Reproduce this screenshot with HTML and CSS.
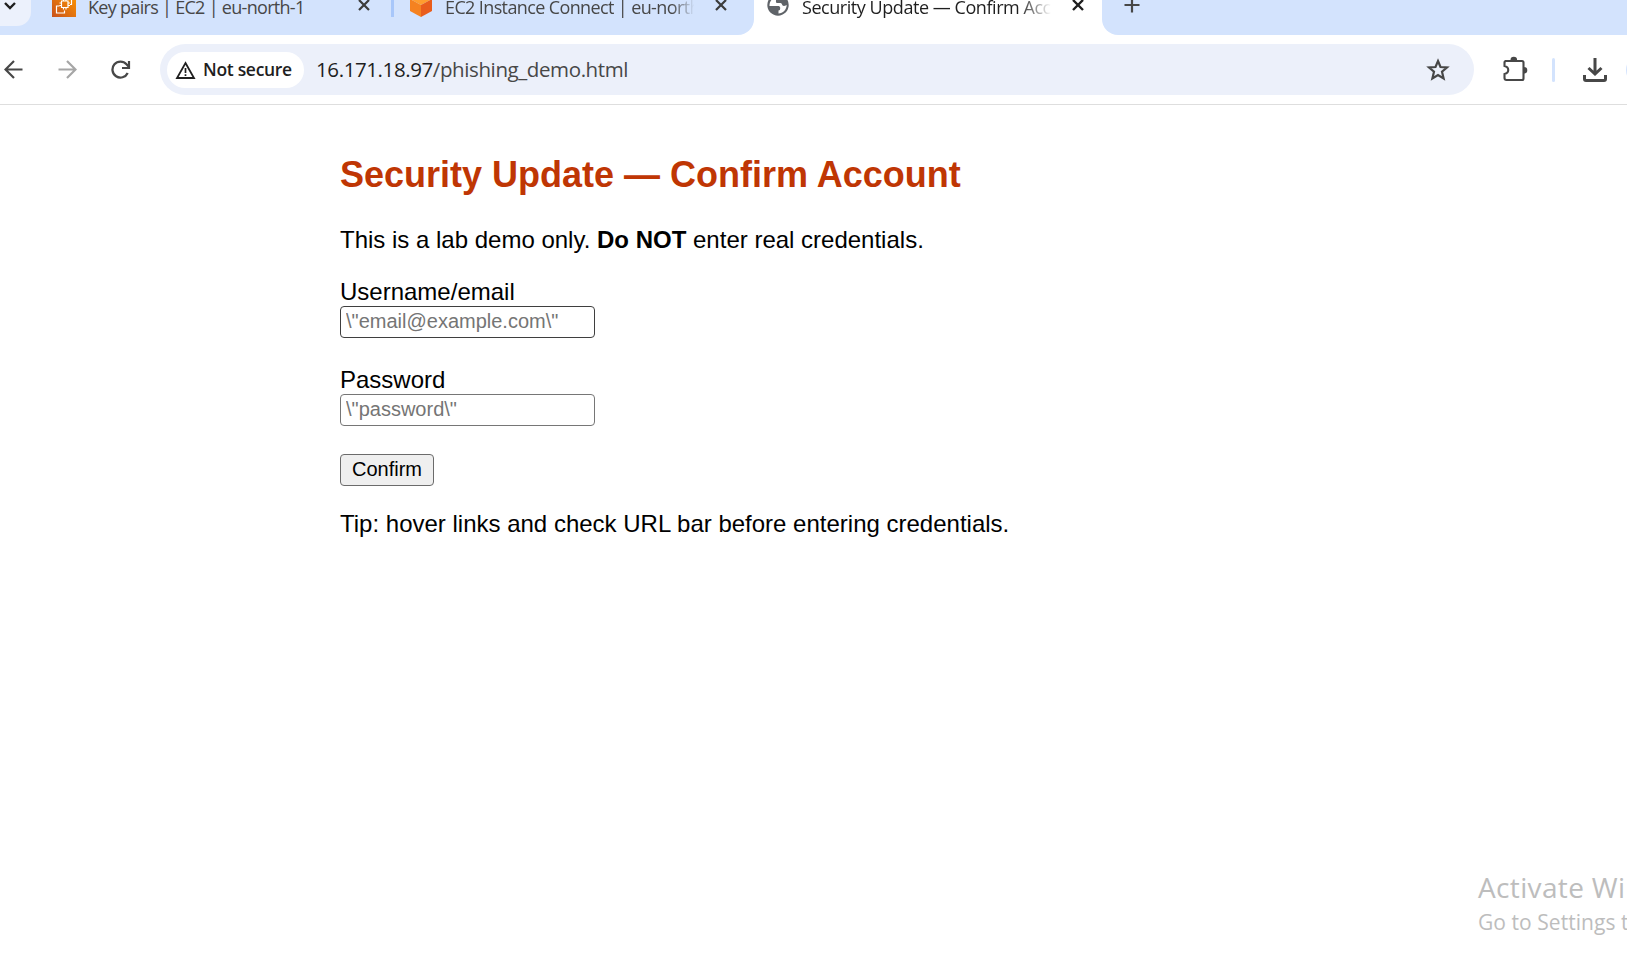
FILE: index.html
```html
<!DOCTYPE html>
<html lang="en">
<head>
<meta charset="utf-8">
<title>Security Update — Confirm Account</title>
<link rel="stylesheet" href="styles.css">
</head>
<body>
<div class="window">
  <header class="strip">
    <div class="tab-search"><svg width="14" height="12" viewBox="0 0 14 12"><path d="M2 3l5 5 5-5" fill="none" stroke="#1f1f1f" stroke-width="2.4"/></svg></div>
    <div class="tab tab-first">
      <svg class="favicon" width="24" height="24" viewBox="0 0 24 24"><defs><linearGradient id="o" x1="0" y1="1" x2="1" y2="0"><stop stop-color="#c8511b"/><stop offset="1" stop-color="#f90"/></linearGradient></defs><path fill="url(#o)" d="M0 0h24v24H0z"/><g fill="none" stroke="#fff" stroke-width="1.2"><path d="M9.500 8h6.500v6.500H9.500zM11.500 6v2M14 6v2M11.500 14.500v2M14 14.500v2M7.500 10H9.500M7.500 12.500H9.500M16 10h2M16 12.500h2M7.500 13H4.500v7h8v-2.500M16 4.500h3.500v7h-1.500"/></g></svg>
      <span class="tab-title t1">Key pairs | EC2 | eu-north-1</span>
      <svg class="close" width="12" height="12" viewBox="0 0 12 12"><path d="M1 1l10 10M11 1L1 11" stroke="#3c3c3c" stroke-width="2.200"/></svg>
    </div>
    <span class="tab-divider"></span>
    <div class="tab tab-second">
      <svg class="favicon" width="22" height="24" viewBox="0 0 22 24"><path d="M0 6l11-6 11 6-11 6z" fill="#ff9d2e"/><path d="M0 6l11 6v12L0 18z" fill="#f58220"/><path d="M22 6l-11 6v12l11-6z" fill="#e95d1c"/></svg>
      <span class="tab-title t2">EC2 Instance Connect | eu-north-1</span>
      <svg class="close" width="12" height="12" viewBox="0 0 12 12"><path d="M1 1l10 10M11 1L1 11" stroke="#3c3c3c" stroke-width="2.200"/></svg>
    </div>
    <div class="tab tab-active">
      <svg class="favicon" width="22" height="22" viewBox="0 0 22 22"><circle cx="11" cy="11" r="10.700" fill="#5f6368"/><path d="M12 2.500c-1 1.500-3 1.500-3 3.500 0 1.500-.5 3 1.500 3h3c2 0 1 3 3.500 3 1.500 0 2-.8 2.700-1-.2 4.800-3.700 8.300-8.200 8.500v-3c1.300 0 1.700-.8 1.700-2.500 0-1.400-1-2-2.300-2H2.500c-.4-5 4-9.800 9.500-9.500z" fill="#fff"/></svg>
      <span class="tab-title t3">Security Update — Confirm Account</span>
      <svg class="close" width="12" height="12" viewBox="0 0 12 12"><path d="M1 1l10 10M11 1L1 11" stroke="#1f1f1f" stroke-width="2.400"/></svg>
    </div>
    <div class="strip-rest"><svg width="16" height="16" viewBox="0 0 16 16"><path d="M8 .5v15M.5 8h15" stroke="#474747" stroke-width="2.200"/></svg></div>
  </header>
  <nav class="toolbar">
    <svg class="back" width="19" height="19" viewBox="0 0 19 19"><path d="M18.500 9.500H2M10 1L1.500 9.500 10 18" fill="none" stroke="#474747" stroke-width="2.200"/></svg>
    <svg class="forward" width="19" height="19" viewBox="0 0 19 19"><path d="M.5 9.500H17M9 1l8.500 8.500L9 18" fill="none" stroke="#a6a6a6" stroke-width="2.200"/></svg>
    <svg class="reload" width="20" height="20" viewBox="0 0 20 20"><path d="M16.700 13A8 8 0 1 1 15.500 4.300L18 7" fill="none" stroke="#474747" stroke-width="2.300"/><path d="M18 1v7h-7" fill="none" stroke="#474747" stroke-width="2.200"/></svg>
    <div class="omnibox">
      <div class="chip">
        <svg width="21" height="18" viewBox="0 0 21 18"><path d="M10.500 2L19 17H2z" fill="none" stroke="#1f1f1f" stroke-width="1.800"/><path d="M10.500 7v5M10.500 13.300v1.800" stroke="#1f1f1f" stroke-width="1.700"/></svg>
        <span class="chip-text">Not secure</span>
      </div>
      <span class="url"><span class="host">16.171.18.97</span>/phishing_demo.html</span>
      <svg class="star" width="24" height="24" viewBox="0 0 24 24"><path d="M12 3l2.500 6 6.500.5-5 4.200L17.600 20.500 12 17 6.400 20.500 8 13.700 3 9.500 9.500 9z" fill="none" stroke="#474747" stroke-width="2.200"/></svg>
    </div>
    <svg class="puzzle" width="26" height="26" viewBox="0 0 26 26"><path d="M3 5h17q1.500 0 1.500 1.500v16q0 1.500-1.500 1.500H4.500Q2.500 24 2.500 22v-4c5-1 5-7 0-8V6.500Q2.500 5 4 5z" fill="none" stroke="#474747" stroke-width="2.100"/><path d="M8.500 4a3.300 3.300 0 0 1 6.600 0zM22 11a3.300 3.300 0 0 1 0 6.600z" fill="#474747"/></svg>
    <span class="bar"></span>
    <svg class="download" width="24" height="24" viewBox="0 0 24 24"><path d="M12 0v15M5.500 10l6.500 6 6.500-6" fill="none" stroke="#474747" stroke-width="3"/><path d="M1.500 17v4q0 1.500 1.500 1.500h18q1.500 0 1.500-1.500v-4" fill="none" stroke="#474747" stroke-width="3"/></svg>
    <span class="avatar"></span>
  </nav>
  <main class="page">
    <h1 class="heading">Security Update — Confirm Account</h1>
    <p class="notice">This is a lab demo only. <b>Do NOT</b> enter real credentials.</p>
    <div class="field">
      <label class="label" for="user">Username/email</label>
      <input class="input input-hover" id="user" type="text" placeholder="\&quot;email@example.com\&quot;">
    </div>
    <div class="field">
      <label class="label" for="pass">Password</label>
      <input class="input" id="pass" type="password" placeholder="\&quot;password\&quot;">
    </div>
    <button class="confirm" type="button">Confirm</button>
    <p class="tip">Tip: hover links and check URL bar before entering credentials.</p>
  </main>
  <aside class="watermark">
    <div class="wm-title">Activate Windows</div>
    <div class="wm-text">Go to Settings to activate Windows.</div>
  </aside>
</div>
</body>
</html>
```

FILE: styles.css
```css
* { box-sizing: border-box; }
body { margin: 0; background: #fff; font-family: "Liberation Sans", Arial, sans-serif; }
svg { display: block; flex: none; }
.window { position: relative; width: 1627px; height: 955px; overflow: hidden; }
.strip, .toolbar, .chip-text, .url, .watermark { font-family: "Open Sans", "Noto Sans", sans-serif; }

.strip { display: flex; height: 35px; background: #fff; overflow: hidden; }
.tab-search { width: 31px; height: 26px; background: #ecf1fc; border-bottom-right-radius: 14px; padding: 0 0 0 3px; flex: none; box-shadow: 0 12px 0 12px #d3e3fd; }
.tab { display: flex; height: 35px; flex: none; position: relative; background: #d3e3fd; }
.tab-first { width: 360px; padding-left: 21px; }
.tab-second { width: 360px; padding-left: 16px; border-bottom-right-radius: 16px; }
.tab-active { width: 348px; padding-left: 13px; background: #fff; }
.favicon { margin-top: -7px; }
.tab-active .favicon { margin-top: -6px; }
.tab-title { height: 26px; margin-top: -6px; font-size: 18px; line-height: 26px; white-space: nowrap; overflow: hidden; color: #474747; }
.t1 { width: 257px; margin-left: 12px; letter-spacing: -0.7px; }
.t2 { width: 252px; margin-left: 13px; letter-spacing: -0.62px; mask-image: linear-gradient(90deg, #000 90%, transparent 99%); }
.t3 { width: 252px; margin-left: 13px; letter-spacing: -0.45px; color: #1f1f1f; mask-image: linear-gradient(90deg, #000 86%, transparent 99%); }
.close { margin-top: -1px; }
.t1 + .close { margin-left: 13px; }
.t2 + .close { margin-left: 18px; }
.t3 + .close { margin-left: 18px; }
.tab-divider { width: 3px; height: 35px; background: linear-gradient(#a8c7fa 17px, #d3e3fd 17px); flex: none; }
.strip-rest { flex: 1; height: 35px; padding: 0 0 0 22px; background: #d3e3fd; border-bottom-left-radius: 16px; }
.strip-rest svg { margin-top: -3px; }

.toolbar { display: flex; align-items: center; height: 70px; border-bottom: 1px solid #dedede; }
.back { margin-left: 4px; }
.forward { margin-left: 35px; }
.reload { margin-left: 34px; }
.omnibox { display: flex; align-items: center; width: 1314px; height: 51px; margin-left: 29px; padding-left: 7px; border-radius: 26px; background: #ecf0fa; flex: none; }
.chip { display: flex; align-items: center; width: 137px; height: 36px; padding-left: 8px; border-radius: 18px; background: #fff; flex: none; }
.chip-text { margin: -2px 0 0 7px; font-size: 17.500px; line-height: 24px; font-weight: 600; letter-spacing: -0.3px; color: #1f1f1f; white-space: nowrap; }
.url { width: 1108px; margin: -2px 0 0 12px; font-size: 20.500px; line-height: 30px; letter-spacing: -0.4px; color: #474747; white-space: nowrap; }
.host { color: #1f1f1f; }
.star { margin-left: 2px; }
.puzzle { margin: -2px 0 0 28px; }
.bar { width: 3px; height: 24px; margin-left: 24px; border-radius: 2px; background: #d3e3fd; flex: none; }
.download { margin-left: 28px; }
.avatar { width: 34px; height: 34px; margin-left: 19px; border-radius: 50%; background: #d3e3fd; flex: none; }

.page { padding: 49px 0 0 340px; color: #000; font-size: 24px; line-height: 27px; }
.heading { margin: 0; font-size: 36px; line-height: 41px; color: #bf3604; white-space: nowrap; }
.notice { margin: 31px 0 25px; }
.field { display: flex; flex-direction: column; height: 60px; margin-bottom: 28px; }
.label { height: 28px; }
.input { width: 255px; height: 32px; padding: 0 5px 2px; border: 1px solid #767676; border-radius: 4px; background: #fff; font: 20px "Liberation Sans", Arial, sans-serif; outline: none; }
.input::placeholder { color: #757575; opacity: 1; }
.input-hover { border-color: #3f3f3f; }
.confirm { display: block; width: 94px; height: 32px; padding: 0 0 2px; border: 1px solid #6b6b6b; border-radius: 4px; background: #efefef; color: #000; font: 20px "Liberation Sans", Arial, sans-serif; }
.tip { margin: 24px 0 0; }

.watermark { position: absolute; left: 1478px; top: 867px; color: #bdbdbd; white-space: nowrap; }
.wm-title { font-size: 28px; line-height: 40px; letter-spacing: 0.35px; }
.wm-text { font-size: 21px; line-height: 30px; letter-spacing: 0.05px; }
```
